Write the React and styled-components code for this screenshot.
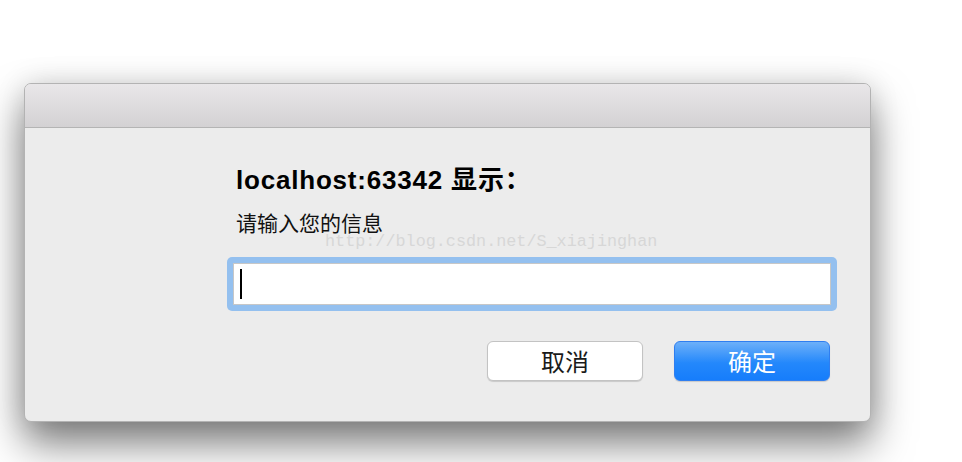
import React from "react"
import styled, { createGlobalStyle } from "styled-components"

const Global = createGlobalStyle`
  html, body {
    margin: 0;
    background: #ffffff;
    font-family: "Liberation Sans", "Noto Sans CJK SC", sans-serif;
  }
`

const Page = styled.div`
  width: 962px;
  height: 462px;
  overflow: hidden;
  padding: 83px 0 0 24px;
  box-sizing: border-box;
`

const Dialog = styled.div`
  width: 847px;
  height: 339px;
  box-sizing: border-box;
  background: #ececec;
  border: 1px solid #b3b3b3;
  border-radius: 7px;
  overflow: hidden;
  box-shadow: 0 22px 40px rgba(0, 0, 0, 0.5), 0 0 30px rgba(0, 0, 0, 0.12);
  display: flex;
  flex-direction: column;
`

const TitleBar = styled.div`
  height: 43px;
  flex: none;
  background: linear-gradient(to bottom, #e9e7e9 0%, #d3d1d3 100%);
  border-bottom: 1px solid #b4b4b4;
`

const Body = styled.div`
  padding: 37px 32px 0 202px;
  display: flex;
  flex-direction: column;
`

const Heading = styled.div`
  font-size: 26px;
  font-weight: 700;
  color: #000;
  line-height: 30px;
  letter-spacing: 0.8px;
  margin-left: 9px;
`

const Message = styled.div`
  position: relative;
  font-size: 21px;
  color: #111;
  line-height: 26px;
  margin: 16px 0 0 9px;
`

const Watermark = styled.span`
  position: absolute;
  left: 89px;
  top: 21px;
  font-family: "Liberation Mono", monospace;
  font-size: 16.8px;
  line-height: 19px;
  color: #d7d7d7;
  white-space: nowrap;
`

const Field = styled.div`
  margin-top: 20px;
  height: 54px;
  width: 610px;
  flex: none;
  box-sizing: border-box;
  border-radius: 5px;
  background: #94c0ef;
  padding: 6px;
`

const Input = styled.div`
  height: 42px;
  background: #fff;
  border: 1px solid #c7c7c7;
  box-sizing: border-box;
  display: flex;
  align-items: center;
  padding-left: 6px;
`

const Caret = styled.span`
  width: 2px;
  height: 30px;
  background: #000;
`

const Actions = styled.div`
  margin-top: 30px;
  display: flex;
  justify-content: flex-end;
  gap: 31px;
  padding-right: 8px;
`

const Button = styled.button`
  width: 156px;
  height: 40px;
  flex: none;
  border-radius: 6px;
  font-family: "Noto Sans CJK SC", sans-serif;
  font-size: 24px;
  line-height: 1;
  padding: 0;
  cursor: pointer;
  border: 1px solid ${(p) => (p.$primary ? "#2f7ef0" : "#c3c3c3")};
  color: ${(p) => (p.$primary ? "#ffffff" : "#1a1a1a")};
  background: ${(p) =>
    p.$primary
      ? "linear-gradient(to bottom, #6db0f9 0%, #2488fb 55%, #167dfb 100%)"
      : "#ffffff"};
  box-shadow: 0 1px 1px rgba(0, 0, 0, 0.15);
`

const App = () => {
  return (
    <>
      <Global />
      <Page>
        <Dialog>
          <TitleBar />
          <Body>
            <Heading>localhost:63342 显示：</Heading>
            <Message>
              请输入您的信息
              <Watermark>http://blog.csdn.net/S_xiajinghan</Watermark>
            </Message>
            <Field>
              <Input>
                <Caret />
              </Input>
            </Field>
            <Actions>
              <Button>取消</Button>
              <Button $primary>确定</Button>
            </Actions>
          </Body>
        </Dialog>
      </Page>
    </>
  )
}

export default App
